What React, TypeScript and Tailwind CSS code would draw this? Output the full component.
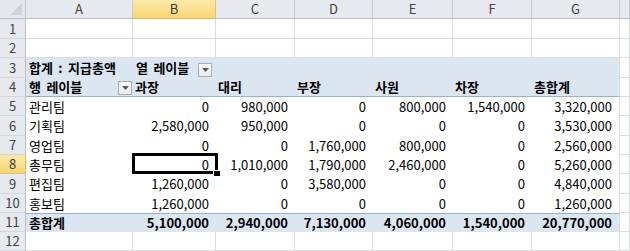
import React from "react";

const COLS = ["A", "B", "C", "D", "E", "F", "G", ""];
const ROW_H = ["h-[20px]", "h-[19px]", "h-[20px]", "h-[19px]", "h-[19px]", "h-[20px]", "h-[19px]", "h-[19px]", "h-[20px]", "h-[19px]", "h-[19px]", "h-[19px]"];

const positions = ["과장", "대리", "부장", "사원", "차장", "총합계"];

const data: [string, string[]][] = [
  ["관리팀", ["0", "980,000", "0", "800,000", "1,540,000", "3,320,000"]],
  ["기획팀", ["2,580,000", "950,000", "0", "0", "0", "3,530,000"]],
  ["영업팀", ["0", "0", "1,760,000", "800,000", "0", "2,560,000"]],
  ["총무팀", ["0", "1,010,000", "1,790,000", "2,460,000", "0", "5,260,000"]],
  ["편집팀", ["1,260,000", "0", "3,580,000", "0", "0", "4,840,000"]],
  ["홍보팀", ["1,260,000", "0", "0", "0", "0", "1,260,000"]],
];

const totals = ["5,100,000", "2,940,000", "7,130,000", "4,060,000", "1,540,000", "20,770,000"];

const FONT = { fontFamily: '"Noto Sans CJK KR", "Noto Sans", sans-serif' };

export default function App() {
  return (
    <div className="w-[630px] h-[251px] overflow-hidden bg-white text-[13px] text-black [word-spacing:2.5px]" style={FONT}>
      <HeaderRow />
      {Array.from({ length: 12 }, (_, i) => (
        <SheetRow key={i} row={i + 1} />
      ))}
    </div>
  );
}

function HeaderRow() {
  return (
    <div className="flex h-[19px]">
      <div className="relative w-[26px] shrink-0 border-r border-b border-[#c3c7cd] bg-[#e4e7eb]">
        <svg className="absolute right-[3px] bottom-[3px]" width="12" height="12" viewBox="0 0 12 12">
          <polygon points="12,0 12,12 0,12" fill="#cfd2d7" />
        </svg>
      </div>
      {COLS.map((c, i) => (
        <div
          key={i}
          className={`${colW(i)} flex items-center justify-center border-r border-b text-[13px] ${
            c === "B"
              ? "bg-gradient-to-b from-[#fdeaa8] to-[#f8d574] border-b-[#eab450] border-r-[#e8c068] text-[#3b3b3b]"
              : "bg-[#e6e9ed] border-b-[#b9bec6] border-r-[#c8ccd2] text-[#444]"
          }`}
        >
          {c}
        </div>
      ))}
    </div>
  );
}

function colW(i: number) {
  return ["w-[107px]", "w-[83px]", "w-[79px]", "w-[78px]", "w-[80px]", "w-[79px]", "w-[88px]", "flex-1"][i];
}

function SheetRow({ row }: { row: number }) {
  const h = ROW_H[row - 1];
  const active = row === 8;
  return (
    <div className={`flex ${h}`}>
      <div
        className={`w-[26px] shrink-0 flex items-center justify-center border-r border-b text-[13px] ${
          active
            ? "bg-gradient-to-b from-[#fdeaa8] to-[#f8d574] border-r-[#eab450] border-b-[#e8c068] text-[#3b3b3b]"
            : "bg-[#e6e9ed] border-r-[#b9bec6] border-b-[#d3d6db] text-[#444]"
        }`}
      >
        {row}
      </div>
      {COLS.map((_, i) => (
        <Cell key={i} row={row} col={i} />
      ))}
    </div>
  );
}

function Cell({ row, col }: { row: number; col: number }) {
  const w = colW(col);
  const plain = `${w} border-r border-b border-[#dadcdd]`;

  if (col === 7 || row < 3 || row > 11) return <div className={plain} />;

  // pivot area, columns A..G
  const lastCol = col === 6 ? "border-r border-r-[#dadcdd]" : "";

  if (row === 3) {
    return (
      <div className={`${w} ${lastCol} bg-[#dce6f1] flex items-center px-[3px] font-bold`}>
        {col === 0 && <span className="whitespace-nowrap">합계 : 지급총액</span>}
        {col === 1 && (
          <>
            <span className="whitespace-nowrap">열 레이블</span>
            <DropButton className="ml-auto mr-[1px] mt-[3px]" />
          </>
        )}
      </div>
    );
  }

  if (row === 4) {
    return (
      <div className={`${w} ${lastCol} bg-[#dce6f1] border-b border-b-[#95b3d7] flex items-center pl-[2px] pr-[1px] font-bold`}>
        {col === 0 ? (
          <>
            <span className="pl-[1px] whitespace-nowrap">행 레이블</span>
            <DropButton className="ml-auto mt-[2px]" />
          </>
        ) : (
          <span className="whitespace-nowrap">{positions[col - 1]}</span>
        )}
      </div>
    );
  }

  if (row === 11) {
    return (
      <div
        className={`${w} ${lastCol} bg-[#dce6f1] border-t border-t-[#95b3d7] flex items-center font-bold ${
          col === 0 ? "pl-[3px]" : "justify-end pr-[7px]"
        }`}
      >
        {col === 0 ? "총합계" : totals[col - 1]}
      </div>
    );
  }

  const [team, vals] = data[row - 5];
  return (
    <div className={`${w} ${lastCol} relative flex items-center ${col === 0 ? "pl-[3px]" : "justify-end pr-[7px]"}`}>
      {col === 0 ? team : vals[col - 1]}
      {row === 8 && col === 1 && (
        <>
          <div className="absolute -left-[1px] -top-[2px] w-[86px] h-[21px] border-[3px] border-black" />
          <div className="absolute -right-[5px] -bottom-[3px] w-[8px] h-[7px] bg-black border border-white" />
        </>
      )}
    </div>
  );
}

function DropButton({ className }: { className: string }) {
  return (
    <div
      className={`${className} w-[14px] h-[14px] shrink-0 flex items-center justify-center border border-[#a7abb0] bg-gradient-to-b from-[#fbfcfd] to-[#e8ebef]`}
    >
      <svg width="7" height="4" viewBox="0 0 7 4">
        <polygon points="0,0 7,0 3.5,4" fill="#555a60" />
      </svg>
    </div>
  );
}
